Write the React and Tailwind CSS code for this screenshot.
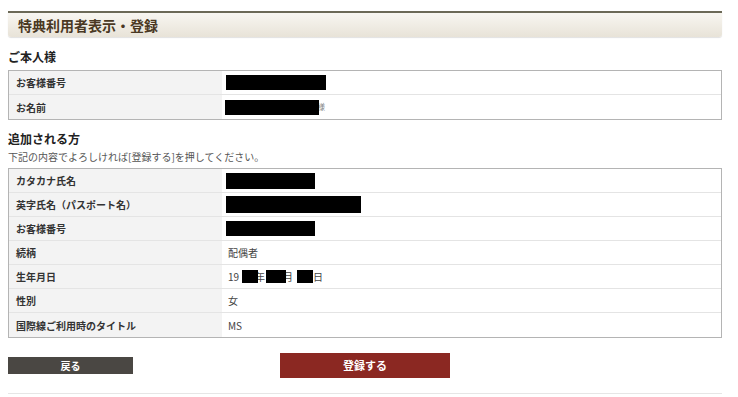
import React from "react";

const font = { fontFamily: '"Noto Sans CJK JP", "Noto Sans", sans-serif' };

function Box({ w, h, className = "" }) {
  return (
    <span
      className={"relative z-10 inline-block bg-black " + className}
      style={{ width: w, height: h }}
    />
  );
}

function Row({ label, children }) {
  return (
    <div className="flex h-[24px]">
      <div className="w-[213px] shrink-0 bg-[#f3f3f3] pl-[7px] flex items-center text-[10px] font-bold text-[#333]">
        {label}
      </div>
      <div className="flex-1 bg-white pl-[6px] flex items-center text-[10px] text-[#444]">
        {children}
      </div>
    </div>
  );
}

export default function App() {
  return (
    <div className="w-[738px] h-[397px] bg-white overflow-hidden" style={font}>
      <div className="pl-[8px] pr-[16px] pt-[11px]">
        {/* Header bar */}
        <div className="h-[26px] border-t-2 border-[#6b6957] bg-gradient-to-b from-[#f8f6f1] to-[#e8e3d8] rounded-b-[3px] shadow-[0_1px_1px_rgba(0,0,0,0.12)] flex items-center pl-[10px]">
          <span className="text-[14px] font-bold text-[#4a3823] leading-none">
            特典利用者表示・登録
          </span>
        </div>

        {/* ご本人様 */}
        <div className="mt-[11px] h-[18px] leading-[18px] text-[12px] font-bold text-[#222]">
          ご本人様
        </div>
        <div className="mt-[4px] border border-[#b4b4b4] divide-y divide-[#e4e4e4]">
          <Row label="お客様番号">
            <Box w={100} h={15} className="-ml-0.5" />
          </Row>
          <Row label="お名前">
            <Box w={94} h={15} className="-ml-[3px]" />
            <span className="text-[8px] text-[#888] -ml-[2px]">様</span>
          </Row>
        </div>

        {/* 追加される方 */}
        <div className="mt-[10px] h-[18px] leading-[18px] text-[12px] font-bold text-[#222]">
          追加される方
        </div>
        <div className="mt-[2px] h-[14px] leading-[14px] text-[10px] text-[#555]">
          下記の内容でよろしければ[登録する]を押してください。
        </div>
        <div className="mt-[4px] border border-[#b4b4b4] divide-y divide-[#e4e4e4]">
          <Row label="カタカナ氏名">
            <Box w={89} h={16} className="-ml-0.5" />
          </Row>
          <Row label="英字氏名（パスポート名）">
            <Box w={135} h={17} className="-ml-0.5" />
          </Row>
          <Row label="お客様番号">
            <Box w={89} h={15} className="-ml-0.5" />
          </Row>
          <Row label="続柄">配偶者</Row>
          <Row label="生年月日">
            <span>19</span>
            <Box w={16} h={13} className="ml-[3px]" />
            <span className="-ml-[3px]">年</span>
            <Box w={20} h={13} className="ml-[1px]" />
            <span className="-ml-[3px]">月</span>
            <Box w={16} h={13} className="ml-[4px]" />
            <span>日</span>
          </Row>
          <Row label="性別">女</Row>
          <Row label="国際線ご利用時のタイトル">MS</Row>
        </div>

        {/* Buttons */}
        <div className="mt-[15px] flex items-center h-[25px]">
          <button className="w-[125px] h-[17px] bg-[#4a4743] text-white text-[10px] font-bold flex items-center justify-center">
            戻る
          </button>
          <button className="ml-[147px] w-[170px] h-[25px] bg-[#8b2822] text-white text-[11px] font-bold flex items-center justify-center">
            登録する
          </button>
        </div>

        <div className="mt-[15px] h-px bg-[#e6e6e6]" />
      </div>
    </div>
  );
}
